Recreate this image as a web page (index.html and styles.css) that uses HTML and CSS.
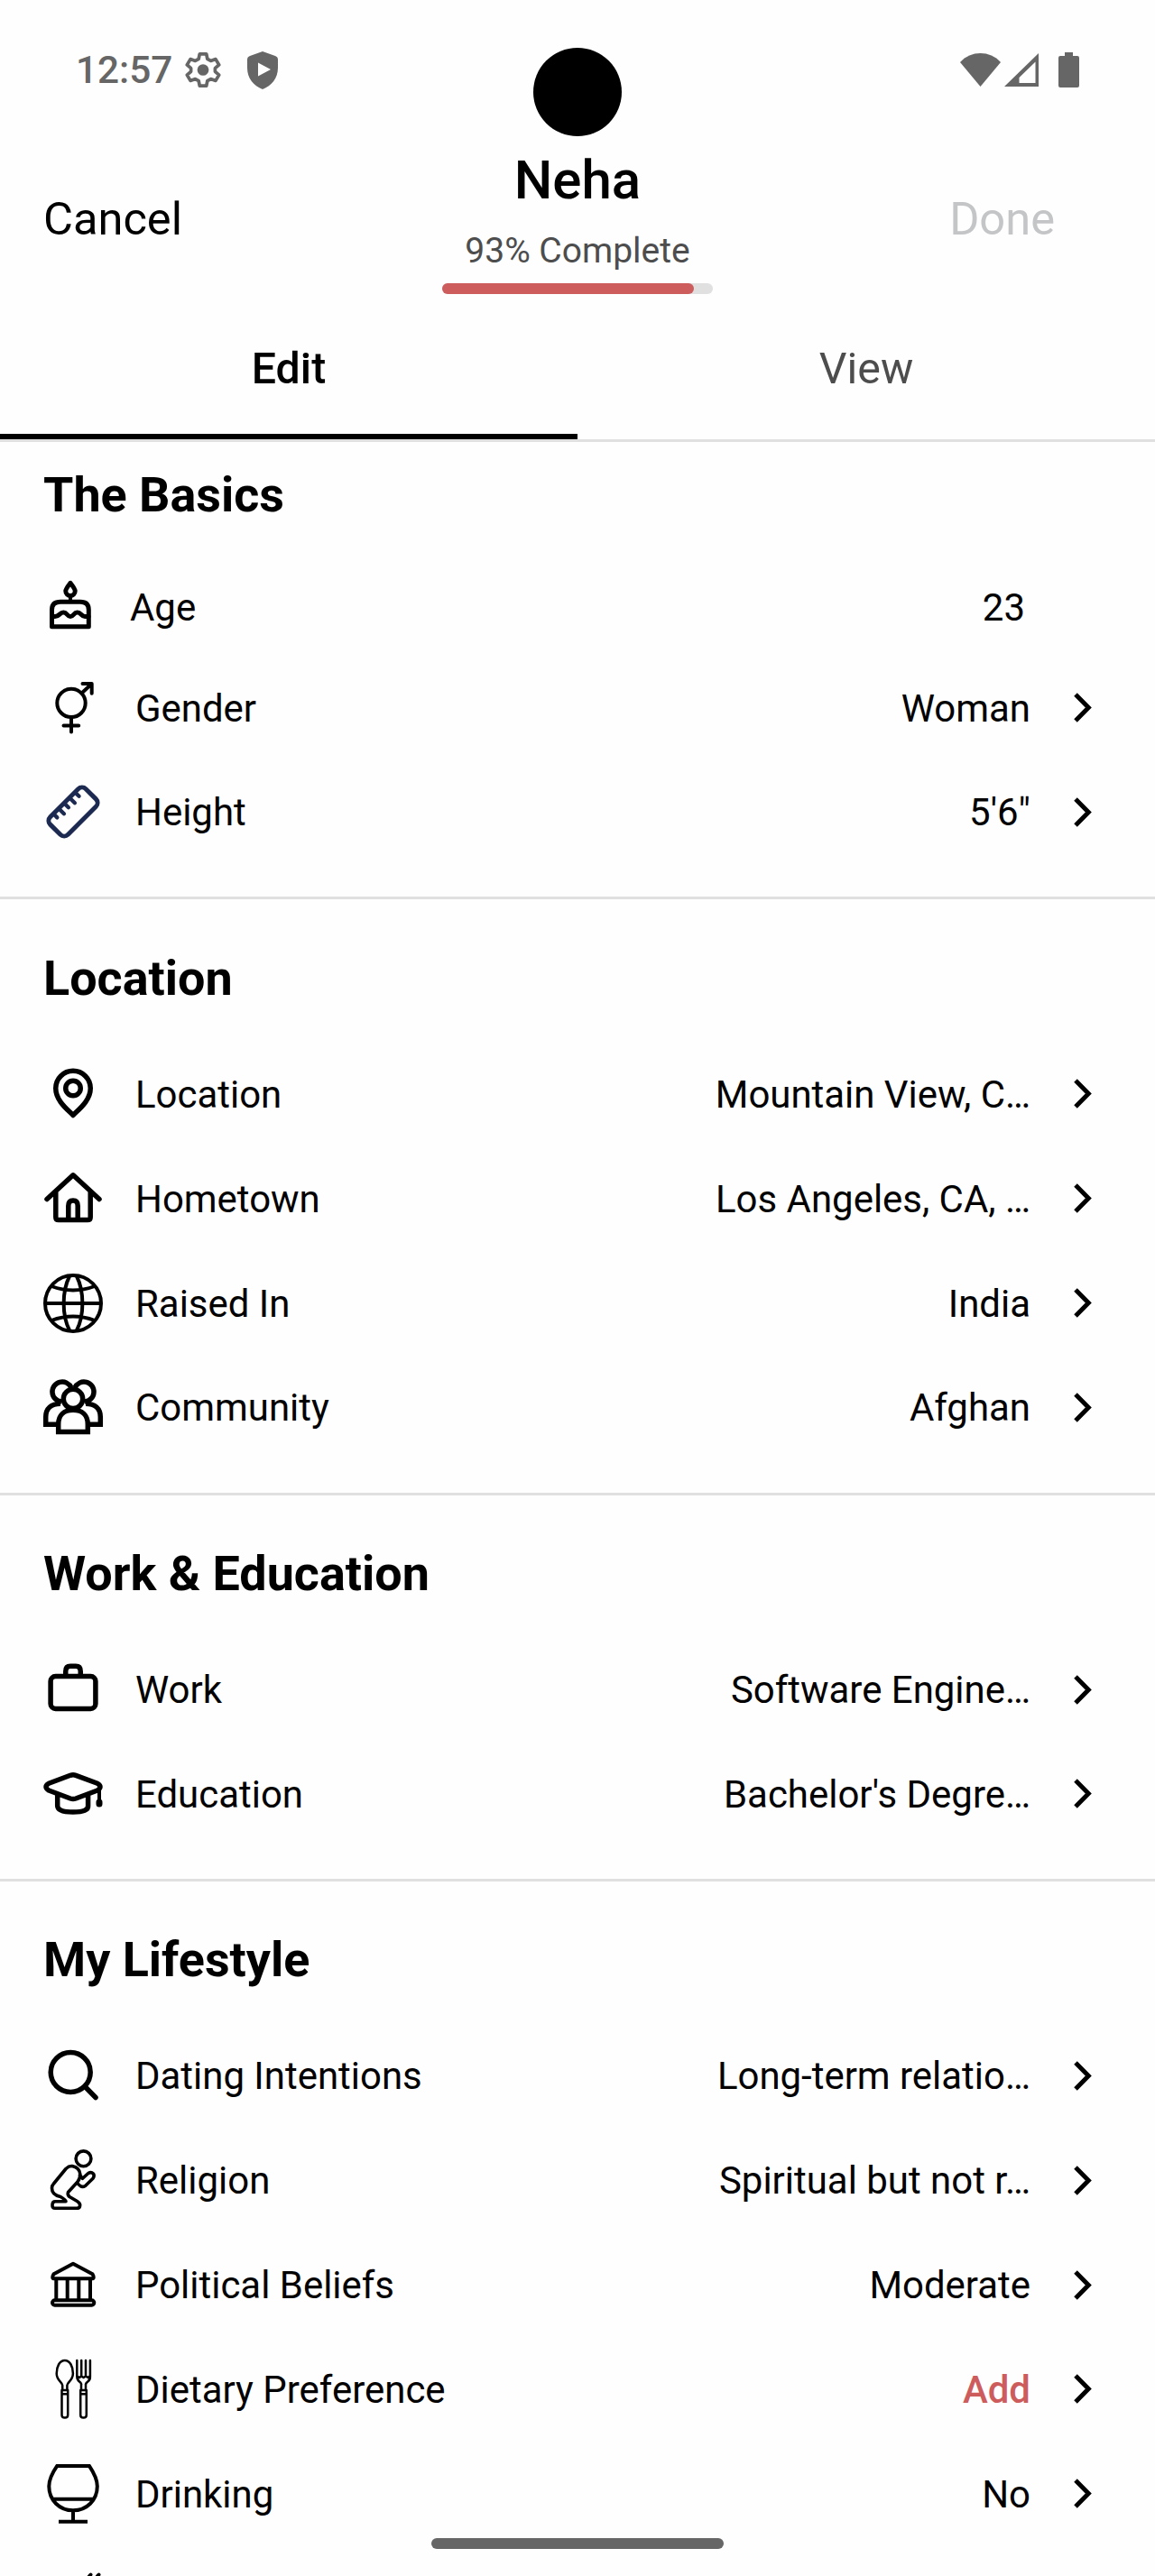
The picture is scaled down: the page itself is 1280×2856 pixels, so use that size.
FILE: index.html
```html
<!DOCTYPE html>
<html lang="en">
<head>
    <meta charset="utf-8">
    <meta name="viewport" content="width=device-width, initial-scale=1.0">
    <title>Edit Profile</title>
    <link rel="stylesheet" href="styles.css">
</head>
<body>
    <svg class="defs" width="0" height="0">
        <symbol id="chevron" viewBox="0 0 20 33">
            <path d="M2 2 L16.3 16.5 L2 31" fill="none" stroke="#000" stroke-width="5"/>
        </symbol>
    </svg>

    <div class="screen">
        <div class="status">
            <span class="time">12:57</span>
            <svg class="gear" viewBox="1.5 1 21 22" width="40" height="41"><path d="M10 2.5h4l.6 3 2 1.1 2.9-1 2 3.4-2.300 2v2l2.300 2-2 3.400-2.900-1-2 1.100-.6 3h-4l-.6-3-2-1.100-2.900 1-2-3.400 2.300-2v-2l-2.300-2 2-3.400 2.900 1 2-1.100z" fill="none" stroke="#666" stroke-width="2" stroke-linejoin="round"/><circle cx="12" cy="12" r="3.400" fill="#666"/></svg>
            <svg class="shield" viewBox="0 0 34 42" width="34" height="42"><path d="M17 0L31 5Q34 6 34 9V18C34 30 27 38 17 42C7 38 0 30 0 18V9Q0 6 3 5ZM12 12.500V27.500L26 20Z" fill="#666" fill-rule="evenodd"/></svg>
            <div class="status-right">
                <svg viewBox="0 0 45 37" width="45" height="37"><path d="M0 10C12-3.300 33-3.300 45 10L22.500 37Z" fill="#666"/></svg>
                <svg viewBox="0 0 38 37" width="38" height="37"><path d="M38 0V37H0ZM34.500 9.500L16.500 27V33H34.500Z" fill="#666" fill-rule="evenodd"/></svg>
                <svg class="battery" viewBox="0 0 23 39" width="23" height="39"><path d="M7 0h9v4h5q2 0 2 2v31q0 2-2 2H2q-2 0-2-2V6q0-2 2-2h5z" fill="#666"/></svg>
            </div>
        </div>
        <div class="camera"></div>

        <div class="header">
            <div class="cancel">Cancel</div>
            <div class="profile">
                <div class="name">Neha</div>
                <div class="complete">93% Complete</div>
                <div class="bar"><div class="bar-fill" style="width: 93%"></div></div>
            </div>
            <div class="done">Done</div>
        </div>

        <div class="tabs">
            <div class="tab active">Edit</div>
            <div class="tab">View</div>
        </div>

        <div class="section basics">
            <h2>The Basics</h2>
            <div class="row age">
                <svg class="icon" viewBox="0 0 60 60"><g stroke-width="5"><path d="M9.500 51.700V33Q9.500 24.300 19 24.300H41Q50.300 24.300 50.300 33V51.700Z"/><path d="M30 17V24" stroke-width="4"/><path d="M30 3.300C26 8.500 24.800 10 24.800 12.200a5.200 5.200 0 0 0 10.400 0C35.200 10 34 8.500 30 3.300Z"/><path d="M10 40.500H13C18 40.500 18 36 22.300 36S26 40.500 30 40.500S33.500 36 37.700 36S42 40.500 46 40.500H50"/></g></svg>
                <span class="label">Age</span>
                <span class="value">23</span>
            </div>
            <div class="row">
                <svg class="icon" viewBox="0 0 66 66"><g stroke-width="4"><circle cx="31" cy="27.400" r="15.700"/><path d="M31 43V59.500M22.500 52.400H39.200M42.500 16.500L53.300 6.500M43.500 6.100H53.700V16.700"/></g></svg>
                <span class="label">Gender</span>
                <span class="value">Woman</span>
                <svg class="chevron"><use href="#chevron"/></svg>
            </div>
            <div class="row">
                <svg class="icon navy" viewBox="0 0 66 66"><g transform="rotate(-45 33 33)" stroke-width="5"><rect x="5.100" y="19.100" width="55.800" height="27.800" rx="6"/><path d="M16 20V25M24.300 20V27.500M32.800 20V26M41.200 20V27.500M49.800 20V25.500" stroke-width="4.300"/></g></svg>
                <span class="label">Height</span>
                <span class="value">5'6"</span>
                <svg class="chevron"><use href="#chevron"/></svg>
            </div>
        </div>

        <div class="section">
            <h2>Location</h2>
            <div class="row">
                <svg class="icon" viewBox="0 0 66 66"><path d="M33 56.500C28 51 13.750 41 13.750 26.600a19.250 19.250 0 0 1 38.500 0C52.250 41 38 51 33 56.500Z"/><circle cx="33" cy="26.500" r="8.250"/></svg>
                <span class="label">Location</span>
                <span class="value">Mountain View, C…</span>
                <svg class="chevron"><use href="#chevron"/></svg>
            </div>
            <div class="row">
                <svg class="icon" viewBox="0 0 66 66"><path d="M4 33.500L33 6.800L62 33.500M13.800 26V53.500Q13.800 56.600 17 56.600H49Q52.200 56.600 52.200 53.500V26M27.800 56V41Q27.800 35 33 35T38.200 41V56"/></svg>
                <span class="label">Hometown</span>
                <span class="value">Los Angeles, CA, …</span>
                <svg class="chevron"><use href="#chevron"/></svg>
            </div>
            <div class="row">
                <svg class="icon" viewBox="0 0 66 66"><g stroke-width="4"><circle cx="33" cy="33" r="31"/><path d="M29 3C20.500 20 20.500 46 29 63M37 3C45.500 20 45.500 46 37 63M2 33H64M9 14Q33 23 57 14M9 52Q33 43 57 52" stroke-linecap="butt"/></g></svg>
                <span class="label">Raised In</span>
                <span class="value">India</span>
                <svg class="chevron"><use href="#chevron"/></svg>
            </div>
            <div class="row">
                <svg class="icon" viewBox="0 0 66 66"><g stroke-linecap="butt" stroke-linejoin="miter"><circle cx="33" cy="23.900" r="10.700"/><path d="M16.700 60.500V52C16.700 42 23 36.300 33 36.300S49.300 42 49.300 52V60.500Z"/><path d="M31 11.500A11 11 0 1 0 20 27M35 11.500A11 11 0 1 1 46 27M16 52.300H2.700V44C2.700 34.500 9 29.200 19 29.200M50 52.300H63.300V44C63.300 34.500 57 29.200 47 29.200"/></g></svg>
                <span class="label">Community</span>
                <span class="value">Afghan</span>
                <svg class="chevron"><use href="#chevron"/></svg>
            </div>
        </div>

        <div class="section">
            <h2>Work &amp; Education</h2>
            <div class="row">
                <svg class="icon" viewBox="0 0 66 66"><rect x="8.100" y="18.600" width="49.800" height="35.900" rx="5.500"/><path d="M24.750 18V13Q24.750 7.300 30 7.300H36Q41.250 7.300 41.250 13V18"/></svg>
                <span class="label">Work</span>
                <span class="value">Software Engine…</span>
                <svg class="chevron"><use href="#chevron"/></svg>
            </div>
            <div class="row">
                <svg class="icon" viewBox="0 0 66 66"><path d="M30 12.300Q33 11.200 36 12.300L60 21.300Q66 24.800 60 29L36 38Q33 39 30 38L6 29Q0 24.800 6 21.300ZM15.700 33V46Q15.700 53 33 53T49.600 46V33"/><path d="M62 28V40" stroke-width="4"/><rect x="60.500" y="40.500" width="3" height="5" rx="1.500" stroke-width="4"/></svg>
                <span class="label">Education</span>
                <span class="value">Bachelor's Degre…</span>
                <svg class="chevron"><use href="#chevron"/></svg>
            </div>
        </div>

        <div class="section last">
            <h2>My Lifestyle</h2>
            <div class="row">
                <svg class="icon" viewBox="0 0 66 66"><circle cx="30.200" cy="29.500" r="22"/><path d="M47 46.300L58 57.500"/></svg>
                <span class="label">Dating Intentions</span>
                <span class="value">Long-term relatio…</span>
                <svg class="chevron"><use href="#chevron"/></svg>
            </div>
            <div class="row">
                <svg class="icon" viewBox="0 0 66 66"><g stroke-width="3.600"><circle cx="44.500" cy="9.300" r="8.400"/><path d="M25 20.500Q28.500 17.200 32 17.600Q40 19 40.800 26.500Q41 31 38 35L27.500 46.500Q26.500 49.500 29 51.500L37.500 56.500Q41.500 59 40.500 62Q40 64.300 37 64.300H13Q9.800 64.300 10 60.500T13.500 56.800H25Q25 55 19 51.500C12 50 9.500 46 9.500 42Q9.500 39 11.500 37Z"/><path d="M40.500 27.500L43.500 31.300L49.800 25.500Q53 23.700 55.500 26Q57 28.500 55 31.300L46.500 39.500Q43.500 41.300 41 39.500L37.500 36.500"/></g></svg>
                <span class="label">Religion</span>
                <span class="value">Spiritual but not r…</span>
                <svg class="chevron"><use href="#chevron"/></svg>
            </div>
            <div class="row">
                <svg class="icon" viewBox="0 0 66 66"><g stroke-width="4"><path d="M33 9.700L11.500 21.300Q8.500 26.300 12.500 26.300H53.500Q57.500 26.300 54.500 21.300Z"/><path d="M14.300 27V49M26.700 27V49M39.300 27V49M52 27V49"/><rect x="10" y="50.300" width="46.300" height="5.400" rx="2.700"/></g></svg>
                <span class="label">Political Beliefs</span>
                <span class="value">Moderate</span>
                <svg class="chevron"><use href="#chevron"/></svg>
            </div>
            <div class="row">
                <svg class="icon" viewBox="0 0 66 66"><g stroke-width="2.500"><path d="M21.200 33V28.500C21.200 25.500 14.700 23 14.700 15.500C14.700 7.500 18.200 1 23.800 1S32.900 7.500 32.900 15.500C32.900 23 26.400 25.500 26.400 28.500V33"/><path d="M20.500 34H27.200V61.500Q27.200 64.600 23.900 64.600T20.500 61.500ZM20.500 38.300H27"/><path d="M37.300 1V18.800Q37.300 22.500 40 24.500T42 28.500V33M47 33V28.500Q46.500 26.500 49.300 24.500T51.900 18.800V1M42.200 1V18M47 1V18M37.500 18.500L40 20L42.200 18.500L44.600 20L47 18.500L49.500 20L51.500 18.500"/><path d="M41.200 34H47.800V61.500Q47.800 64.600 44.500 64.600T41.200 61.500ZM41.200 38.300H47.700"/></g></svg>
                <span class="label">Dietary Preference</span>
                <span class="value add">Add</span>
                <svg class="chevron"><use href="#chevron"/></svg>
            </div>
            <div class="row">
                <svg class="icon" viewBox="0 0 66 66"><g stroke-width="4" stroke-linecap="butt" stroke-linejoin="miter"><path d="M15.300 1.900H50.900C57 11 59.800 17 59.800 24.500C59.800 40 48 51.300 33 51.300S6.300 40 6.300 24.500C6.300 17 9 11 15.300 1.900ZM10 38.700H56M33 51V63M17 63.700H49"/></g></svg>
                <span class="label">Drinking</span>
                <span class="value">No</span>
                <svg class="chevron"><use href="#chevron"/></svg>
            </div>
            <div class="row">
                <svg class="icon" viewBox="0 0 66 66"><path d="M52.500 6.500Q49.500 9 48.500 14M61.500 6.500Q58.500 9 57.500 14" stroke-width="4"/></svg>
            </div>
        </div>
    </div>
    <div class="home-bar"></div>
</body>
</html>
```
FILE: styles.css
```css
body{
    margin: 0;
    background: #fefefe;
    color: #000;
    font-family: Roboto, "Liberation Sans", sans-serif;
    overflow: hidden;
}
.defs{
    position: absolute;
}
.screen{
    width: 1280px;
    height: 2856px;
    overflow: hidden;
    position: relative;
}

/* status bar */
.status{
    display: flex;
    align-items: center;
    box-sizing: border-box;
    height: 155px;
    padding: 0 84px 0 84px;
}
.time{
    width: 121px;
    font-size: 42.3px;
    font-weight: 500;
    color: #666;
}
.shield{
    margin-left: 29px;
}
.status-right{
    display: flex;
    align-items: center;
    gap: 4px;
    margin-left: auto;
}
.battery{
    margin-left: 18px;
}
.camera{
    position: absolute;
    top: 53px;
    left: 591px;
    width: 98px;
    height: 98px;
    border-radius: 50%;
    background: #000;
}

/* header */
.header{
    display: grid;
    grid-template-columns: 1fr 300px 1fr;
    height: 187px;
    box-sizing: border-box;
    padding: 10px 111px 0 48px;
}
.profile{
    text-align: center;
    width: 300px;
    margin-left: 31.5px;
}
.name{
    font-size: 60px;
    line-height: 70px;
    font-weight: 500;
}
.complete{
    margin-top: 20px;
    font-size: 39px;
    line-height: 47px;
    color: #4d4d4d;
}
.bar{
    margin-top: 12px;
    height: 12px;
    border-radius: 6px;
    background: #e0e0e0;
}
.bar-fill{
    height: 12px;
    border-radius: 6px;
    background: #cd5c5c;
}
.cancel, .done{
    padding-top: 48px;
    font-size: 50.6px;
    line-height: 60px;
}
.done{
    text-align: right;
    color: #c4c5c7;
}

/* tabs */
.tabs{
    display: flex;
    height: 145px;
    border-bottom: 3px solid #e0e0e0;
}
.tab{
    flex: 1;
    box-sizing: border-box;
    padding-top: 38px;
    text-align: center;
    font-size: 48.3px;
    line-height: 58px;
    color: #4d4d4d;
}
.active{
    color: #000;
    font-weight: 500;
    border-bottom: 6px solid #000;
}

/* profile sections */
.section{
    padding: 55.4px 68px 36.1px 48px;
    border-bottom: 3px solid #e0e0e0;
}
.basics{
    padding-top: 27px;
}
.last{
    border-bottom: none;
}
h2{
    margin: 0 0 38.2px;
    font-size: 53.9px;
    line-height: 64px;
    font-weight: 700;
}
.row{
    display: flex;
    align-items: center;
    height: 115.86px;
}
.icon{
    flex: none;
    width: 66px;
    height: 66px;
    margin-right: 36px;
    overflow: visible;
    fill: none;
    stroke: #000;
    stroke-width: 5.5;
    stroke-linecap: round;
    stroke-linejoin: round;
}
.navy{
    stroke: #1c2951;
}
.label, .value{
    padding-top: 2px;
    font-size: 41.95px;
    line-height: 50px;
    white-space: nowrap;
}
.value{
    margin-left: auto;
}
.add{
    color: #cd5c5c;
    font-weight: 500;
}
.chevron{
    width: 20px;
    height: 33px;
    margin: 0 2px 0 48px;
}
.age{
    height: 107.4px;
}
.age .icon{
    width: 60px;
    height: 60px;
}
.age .value{
    margin-right: 76px;
}

.home-bar{
    position: fixed;
    top: 2814px;
    left: 478px;
    width: 324px;
    height: 12px;
    border-radius: 6px;
    background: #666;
}
```
